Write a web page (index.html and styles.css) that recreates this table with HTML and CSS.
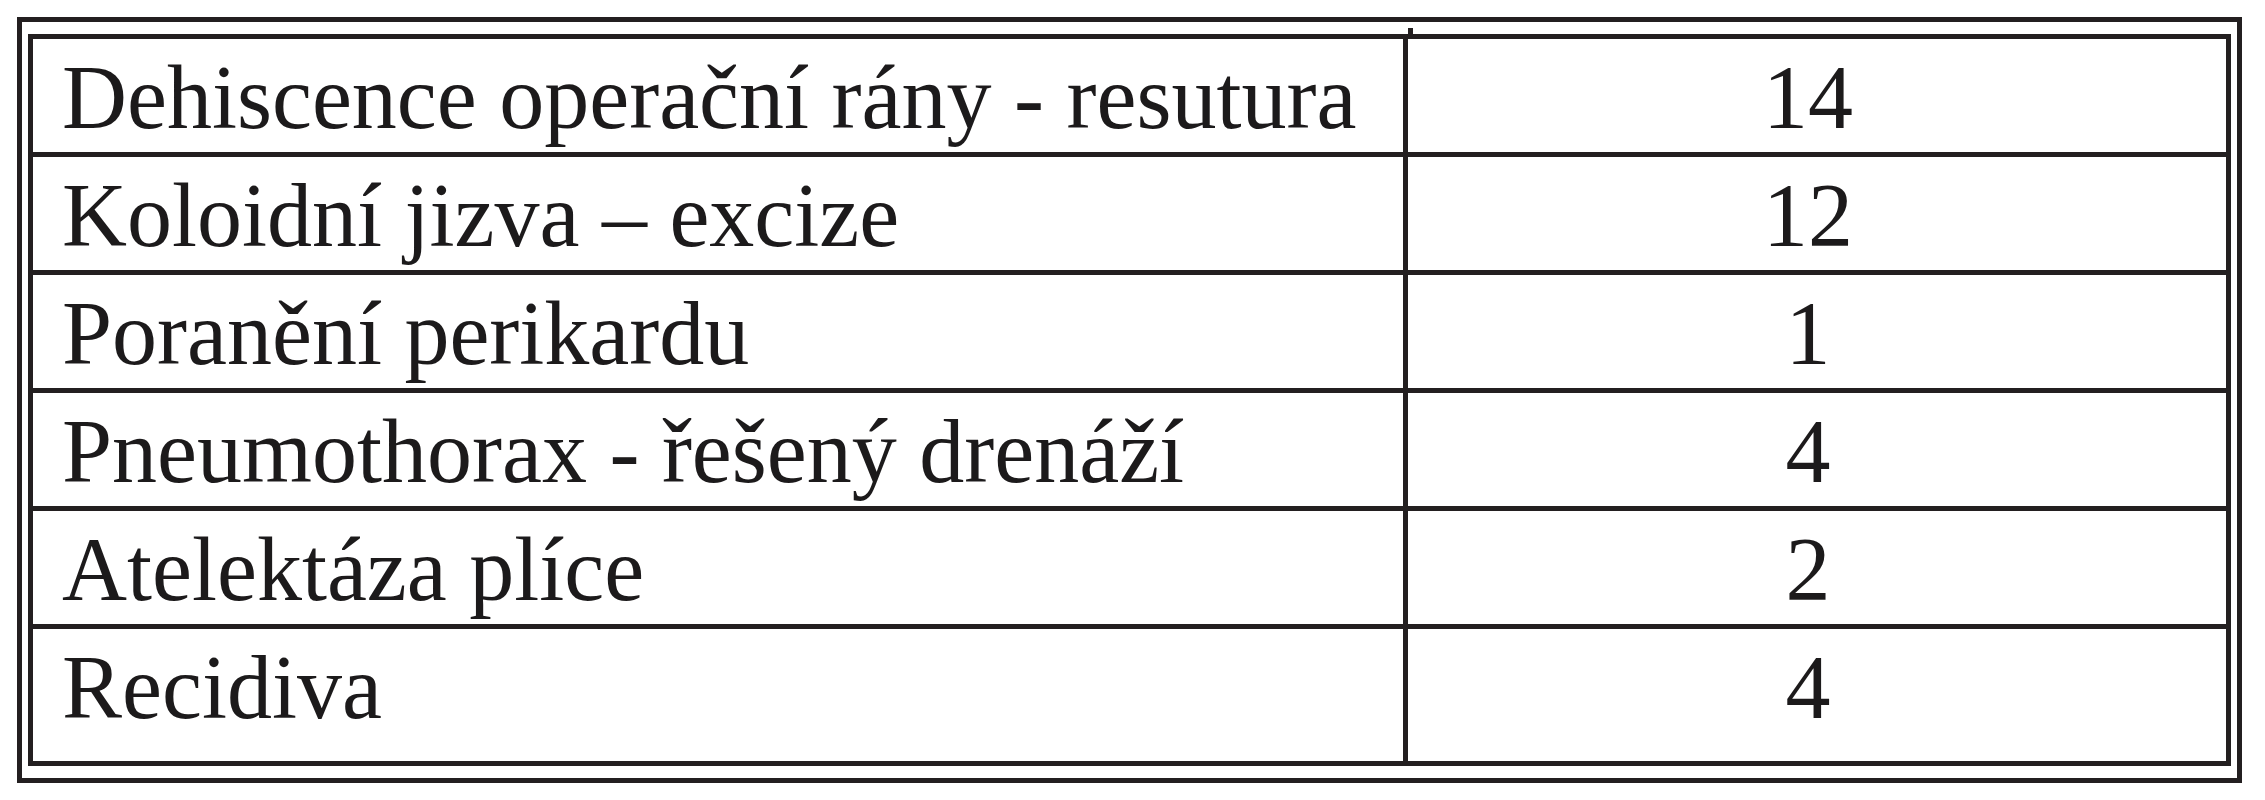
FILE: index.html
```html
<!DOCTYPE html>
<html lang="cs">
<head>
<meta charset="utf-8">
<title>Komplikace</title>
<link rel="stylesheet" href="styles.css">
</head>
<body>
<div class="frame">
  <div class="grid">
    <div class="cell label">Dehiscence operační rány - resutura</div>
    <div class="cell num">14</div>
    <div class="cell label">Koloidní jizva – excize</div>
    <div class="cell num">12</div>
    <div class="cell label">Poranění perikardu</div>
    <div class="cell num">1</div>
    <div class="cell label">Pneumothorax - řešený drenáží</div>
    <div class="cell num">4</div>
    <div class="cell label">Atelektáza plíce</div>
    <div class="cell num">2</div>
    <div class="cell label last">Recidiva</div>
    <div class="cell num last">4</div>
  </div>
</div>
</body>
</html>
```

FILE: styles.css
```css
html, body {
  margin: 0;
  padding: 0;
  background: #ffffff;
}

body {
  padding: 17px 0 0 17px;
  font-family: "Liberation Serif", "Times New Roman", serif;
  color: #1c1a1b;
}

.frame {
  width: 2203px;
  border: 5px solid #231f20;
  padding: 12px 6px;
}

.grid {
  position: relative;
  display: grid;
  grid-template-columns: 1375px 1fr;
  border: 5px solid #231f20;
}

.grid::before {
  content: "";
  position: absolute;
  left: 1375px;
  top: -11px;
  width: 5px;
  height: 11px;
  background: #231f20;
}

.cell {
  height: 113px;
  box-sizing: content-box;
  border-bottom: 5px solid #231f20;
  font-size: 90px;
  line-height: 90px;
  padding-top: 0;
  white-space: nowrap;
}

.label {
  border-right: 5px solid #231f20;
  padding-left: 29px;
  height: 99px;
  padding-top: 14px;
}

.num {
  text-align: center;
  padding-right: 18px;
  height: 99px;
  padding-top: 14px;
}

.cell.last {
  border-bottom: none;
  height: 118px;
}
```
